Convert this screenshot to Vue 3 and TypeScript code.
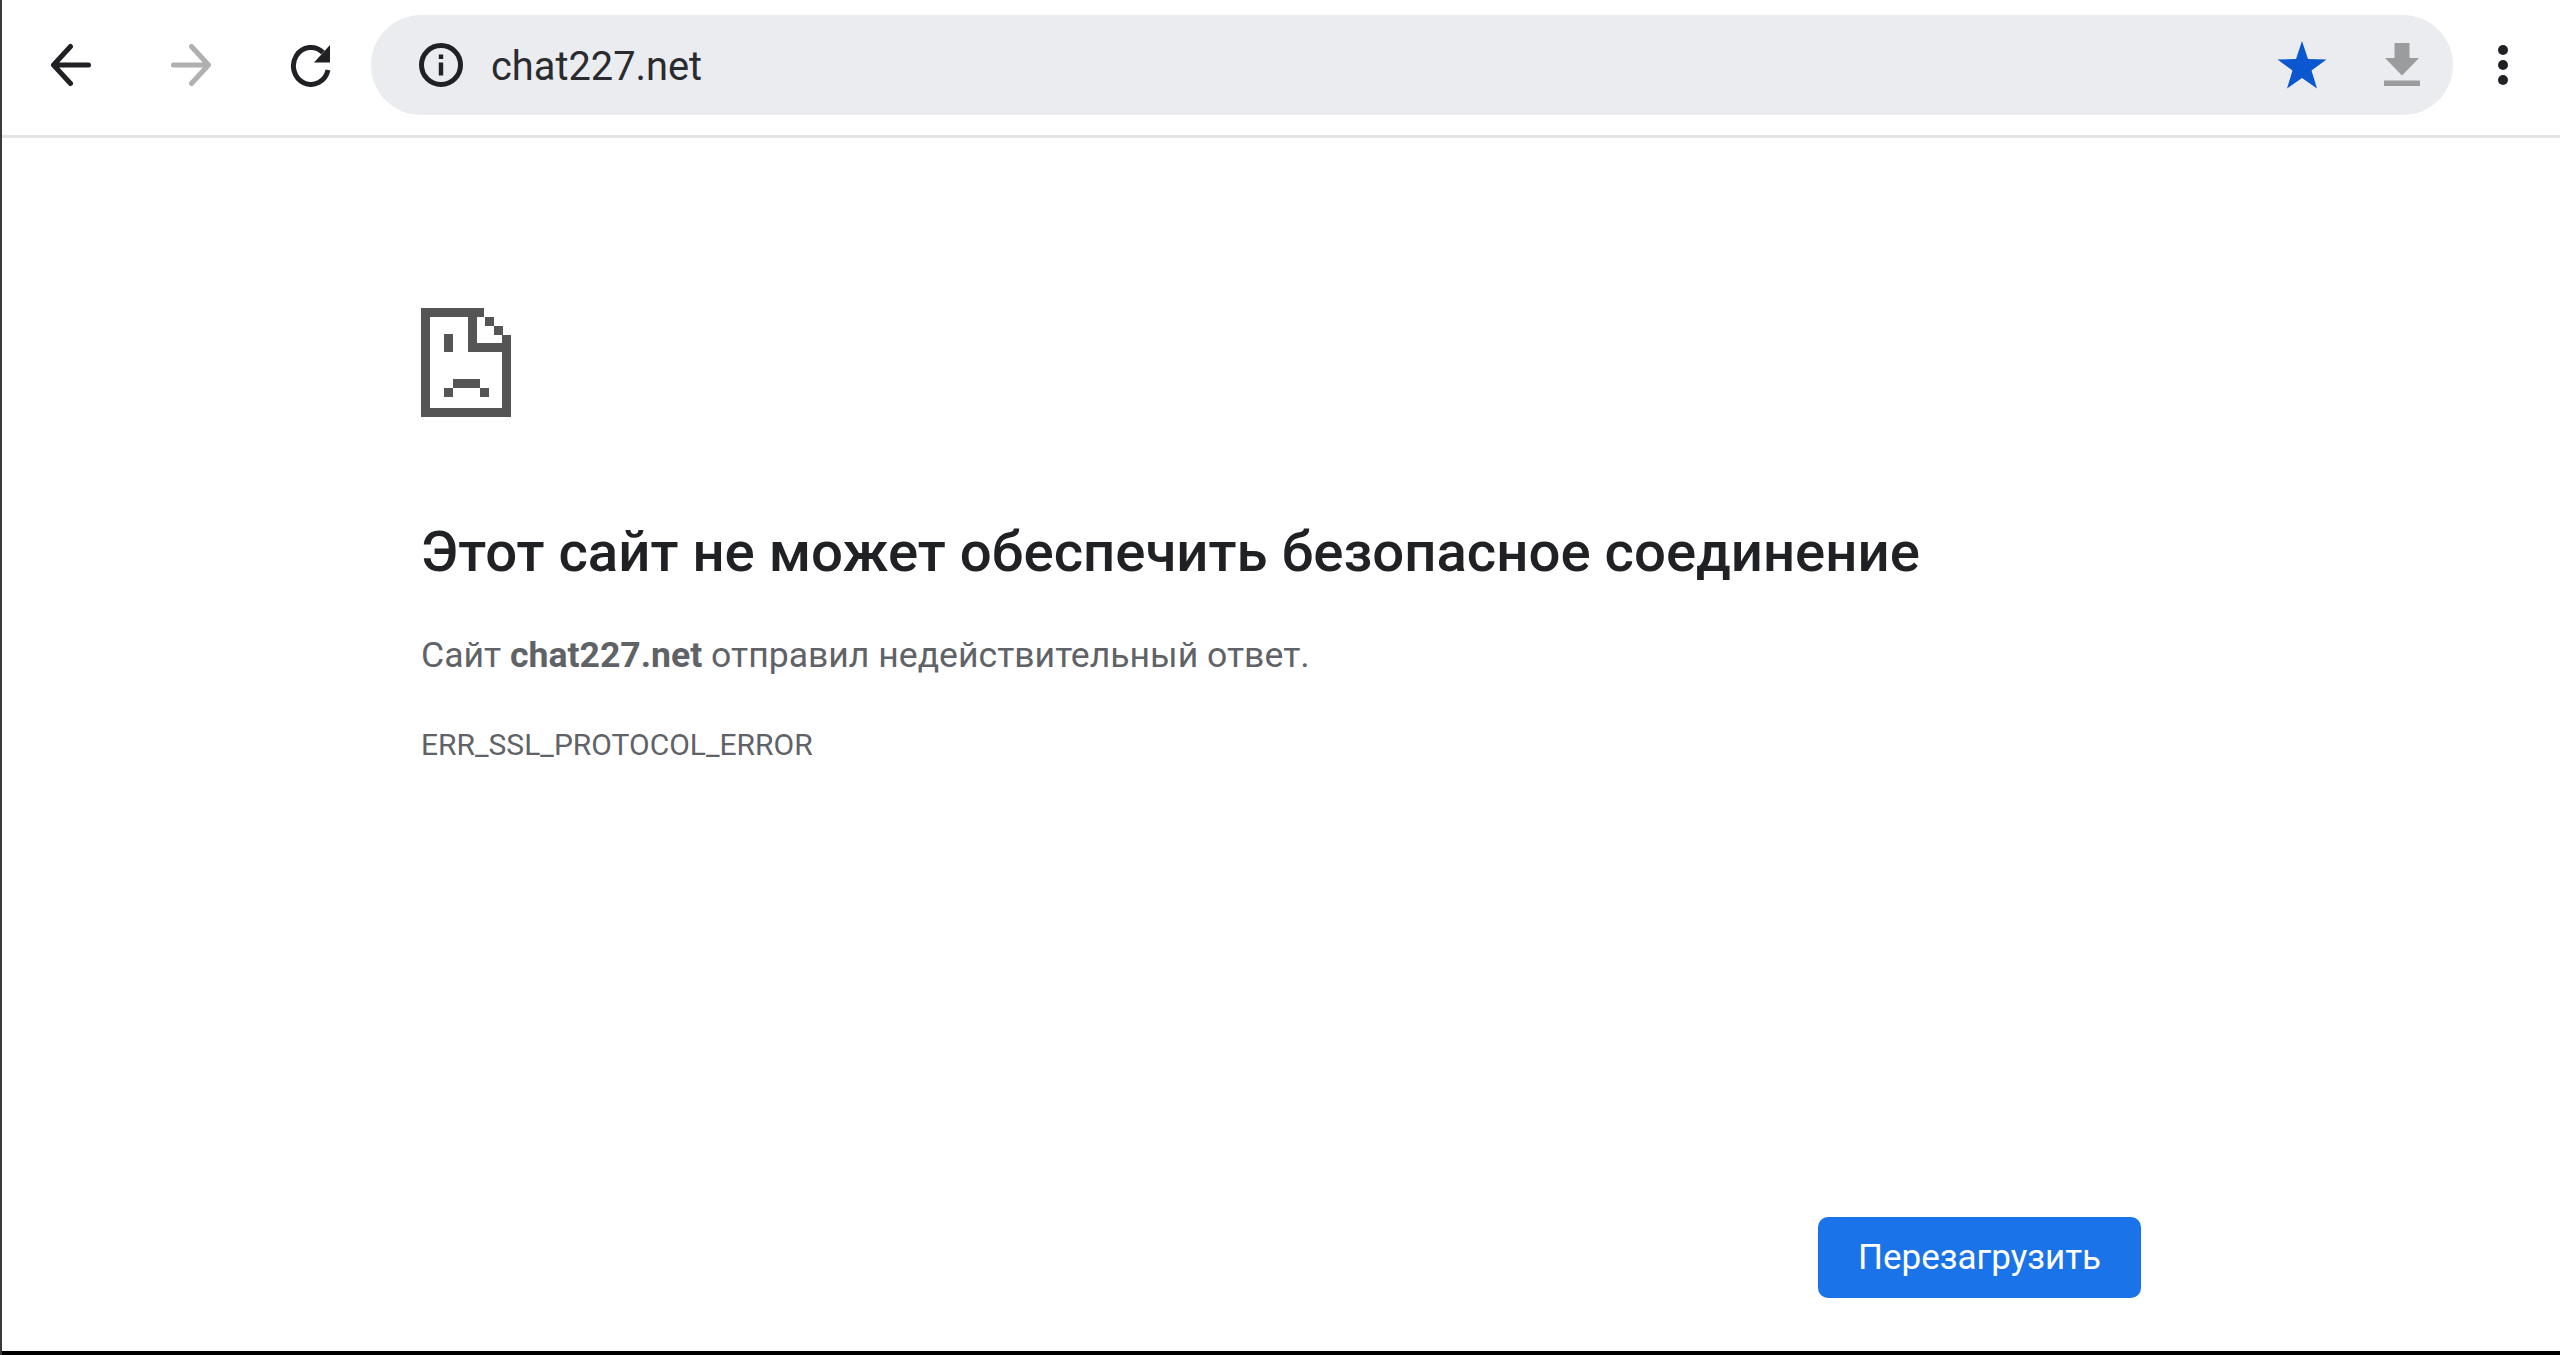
<script setup lang="ts">
const host = 'chat227.net'
const errorCode = 'ERR_SSL_PROTOCOL_ERROR'
</script>

<template>
  <div class="page">
    <header class="toolbar">
      <button class="nav back" aria-label="Назад">
        <svg width="44" height="44" viewBox="0 0 44 44"><path d="M39.500 22H5M21.500 3.500 4.500 22 21.500 40.500" fill="none" stroke="currentColor" stroke-width="5" stroke-linecap="round" stroke-linejoin="round"/></svg>
      </button>
      <button class="nav forward" aria-label="Вперёд">
        <svg width="44" height="44" viewBox="0 0 44 44"><path d="M4.500 22H39M22.500 3.500 39.500 22 22.500 40.500" fill="none" stroke="currentColor" stroke-width="5" stroke-linecap="round" stroke-linejoin="round"/></svg>
      </button>
      <button class="nav reload" aria-label="Обновить">
        <svg width="44" height="44" viewBox="0 0 44 44"><path d="M34 9.500A17.500 18.500 0 1 0 39 27" fill="none" stroke="currentColor" stroke-width="5"/><path d="M41 2V19.500H25Z" fill="currentColor"/></svg>
      </button>
      <div class="omnibox">
        <svg class="info" width="44" height="44" viewBox="0 0 44 44"><circle cx="22" cy="22" r="19.500" fill="none" stroke="currentColor" stroke-width="5"/><rect x="19.800" y="19.500" width="4.400" height="13" fill="currentColor"/><rect x="19.800" y="11.500" width="4.400" height="4.500" fill="currentColor"/></svg>
        <span class="url">{{ host }}</span>
        <svg class="star" width="50" height="48" viewBox="0 0 50 48"><path d="M25 0 31 18 49.500 18.500 34.500 29.500 40 47.500 25 37 10 47.500 15.500 29.500 0.500 18.500 19 18Z" fill="currentColor"/></svg>
        <svg class="download" width="36" height="44" viewBox="0 0 36 44"><path d="M10.500 0H25.500V15H35L18 32.500 1 15H10.500Z" fill="currentColor"/><rect y="37.500" width="36" height="5.500" fill="currentColor"/></svg>
      </div>
      <div class="menu" aria-label="Меню"><i></i><i></i><i></i></div>
    </header>

    <main class="content">
      <svg class="sad" width="90" height="109" viewBox="0 0 90 109">
        <path fill="#555" fill-rule="evenodd" d="M0 0H63V9H9V100H81V27H90V109H0Z"/>
        <path fill="#555" d="M64 9H73V18H64ZM73 18H82V27H73ZM47 9H56V35H90V44H47ZM23 26H32V44H23ZM32 71H59V80H32ZM23 80H32V89H23ZM59 80H68V89H59Z"/>
      </svg>
      <h1 class="title">Этот сайт не может обеспечить безопасное соединение</h1>
      <p class="message">Сайт <strong>{{ host }}</strong> отправил недействительный ответ.</p>
      <p class="code">{{ errorCode }}</p>
      <button class="reload-btn">Перезагрузить</button>
    </main>
    <div class="bottom"></div>
  </div>
</template>

<style scoped>
.page {
  height: 1355px;
  display: flex;
  flex-direction: column;
  box-sizing: border-box;
  border-left: 2px solid #3a3a3a;
  font-family: Roboto, "Liberation Sans", sans-serif;
  background: #fff;
  overflow: hidden;
}
.toolbar {
  height: 130px;
  flex: none;
  display: flex;
  align-items: center;
  padding-bottom: 5px;
  border-bottom: 3px solid #e3e3e3;
  box-sizing: content-box;
}
.nav {
  width: 44px;
  height: 44px;
  padding: 0;
  border: 0;
  background: none;
  color: #202124;
  display: block;
}
.back { margin-left: 47px; }
.forward { margin-left: 76px; color: #b0b0b0; }
.reload { margin-left: 76px; }
.nav svg, .omnibox svg { display: block; }
.omnibox {
  margin-left: 38px;
  width: 2082px;
  height: 100px;
  border-radius: 50px;
  background: #ebecf0;
  display: flex;
  align-items: center;
  color: #202124;
  box-sizing: border-box;
  padding-left: 48px;
}
.url {
  margin-left: 28px;
  padding-top: 2px;
  font-size: 39.800px;
  color: #2a2b2e;
  flex: 1;
}
.star { color: #0b57d0; }
.download { color: #9b9c9e; margin-left: 57px; margin-right: 33px; }
.menu {
  margin-left: 45px;
  display: flex;
  flex-direction: column;
  gap: 5px;
}
.menu i {
  display: block;
  width: 10px;
  height: 10px;
  border-radius: 50%;
  background: #202124;
}
.content {
  flex: 1;
  display: flex;
  flex-direction: column;
  align-items: flex-start;
  padding: 170px 0 0 419px;
  min-height: 0;
}
.sad { display: block; }
.title {
  margin: 101px 0 0;
  font-size: 56.350px;
  line-height: 68px;
  font-weight: 500;
  color: #202124;
}
.message {
  margin: 45px 0 0;
  font-size: 35.600px;
  line-height: 48px;
  color: #5f6368;
}
.message strong { font-weight: 700; }
.code {
  margin: 46px 0 0;
  font-size: 30px;
  line-height: 40px;
  color: #5f6368;
}
.reload-btn {
  margin: auto 0 53px 1397px;
  width: 323px;
  height: 81px;
  border: 0;
  border-radius: 10px;
  background: #1a73e8;
  color: #fff;
  font-family: inherit;
  font-size: 35px;
  padding: 0;
}
.bottom {
  height: 4px;
  flex: none;
  background: #000;
  margin-left: -2px;
}
</style>
